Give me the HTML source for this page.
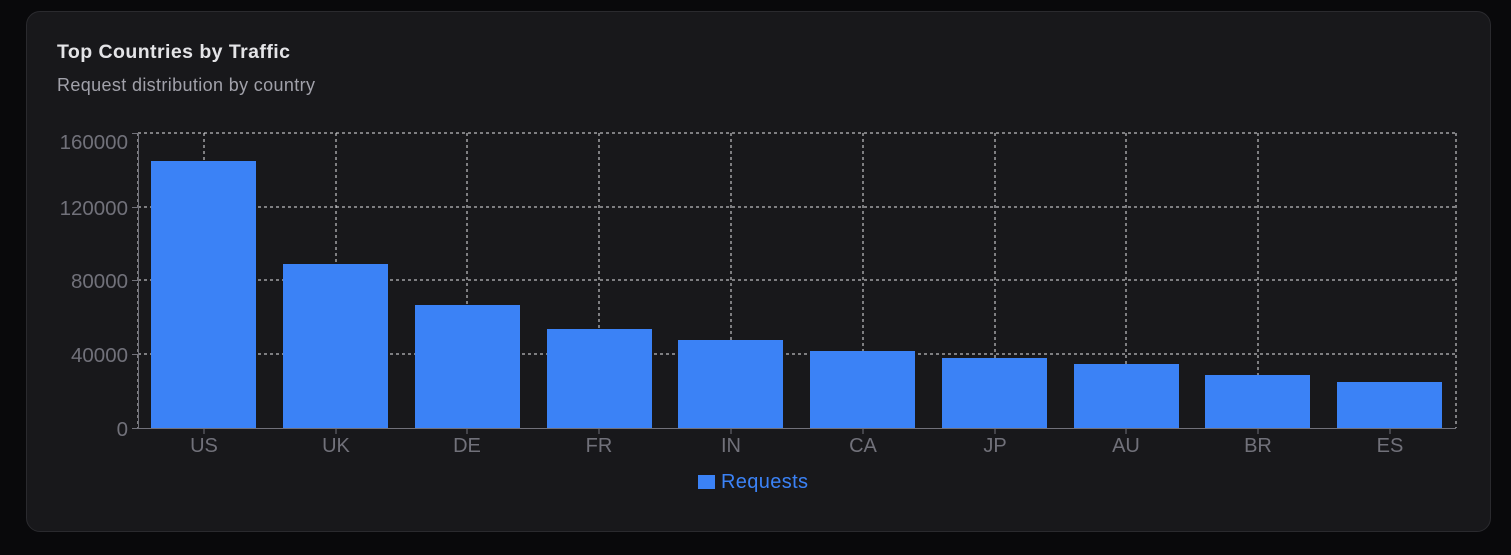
<!DOCTYPE html>
<html><head><style>
body{margin:0;background:#09090b;width:1511px;height:555px;overflow:hidden;font-family:"Liberation Sans",sans-serif}
.card{position:absolute;left:26px;top:11px;width:1465px;height:521px;background:#18181b;border:1px solid #2a2a2e;border-radius:14px;box-sizing:border-box}
</style></head><body>
<div class="card"></div>
<svg width="1511" height="555" style="position:absolute;left:0;top:0" font-family="Liberation Sans, sans-serif">
<text x="57" y="58" fill="#e4e4e7" font-size="19.5" font-weight="bold" textLength="233">Top Countries by Traffic</text>
<text x="57" y="91" fill="#a1a1aa" font-size="18" textLength="258">Request distribution by country</text>
<g stroke="#e4e4e7" stroke-dasharray="3 3" stroke-width="1">
<line x1="138" y1="133" x2="1456" y2="133"/>
<line x1="138" y1="207" x2="1456" y2="207"/>
<line x1="138" y1="280" x2="1456" y2="280"/>
<line x1="138" y1="354" x2="1456" y2="354"/>
<line x1="138" y1="133" x2="138" y2="428"/>
<line x1="204" y1="133" x2="204" y2="428"/>
<line x1="336" y1="133" x2="336" y2="428"/>
<line x1="467" y1="133" x2="467" y2="428"/>
<line x1="599" y1="133" x2="599" y2="428"/>
<line x1="731" y1="133" x2="731" y2="428"/>
<line x1="863" y1="133" x2="863" y2="428"/>
<line x1="995" y1="133" x2="995" y2="428"/>
<line x1="1126" y1="133" x2="1126" y2="428"/>
<line x1="1258" y1="133" x2="1258" y2="428"/>
<line x1="1456" y1="133" x2="1456" y2="428"/>
</g>
<g fill="#3b82f6">
<rect x="151" y="161" width="105" height="267"/>
<rect x="283" y="264" width="105" height="164"/>
<rect x="415" y="305" width="105" height="123"/>
<rect x="547" y="329" width="105" height="99"/>
<rect x="678" y="340" width="105" height="88"/>
<rect x="810" y="351" width="105" height="77"/>
<rect x="942" y="358" width="105" height="70"/>
<rect x="1074" y="364" width="105" height="64"/>
<rect x="1205" y="375" width="105" height="53"/>
<rect x="1337" y="382" width="105" height="46"/>
</g>
<g stroke="#71717a" stroke-width="1">
<line x1="138" y1="428.5" x2="1456" y2="428.5"/>
<line x1="138.5" y1="133" x2="138.5" y2="428"/>
<line x1="132" y1="133.5" x2="138" y2="133.5"/><line x1="132" y1="207.5" x2="138" y2="207.5"/><line x1="132" y1="280.5" x2="138" y2="280.5"/><line x1="132" y1="354.5" x2="138" y2="354.5"/><line x1="132" y1="428.5" x2="138" y2="428.5"/>
<line x1="204" y1="428" x2="204" y2="434"/><line x1="336" y1="428" x2="336" y2="434"/><line x1="467" y1="428" x2="467" y2="434"/><line x1="599" y1="428" x2="599" y2="434"/><line x1="731" y1="428" x2="731" y2="434"/><line x1="863" y1="428" x2="863" y2="434"/><line x1="995" y1="428" x2="995" y2="434"/><line x1="1126" y1="428" x2="1126" y2="434"/><line x1="1258" y1="428" x2="1258" y2="434"/><line x1="1390" y1="428" x2="1390" y2="434"/>
</g>
<g fill="#71717a" font-size="20.5" text-anchor="end">
<text x="128" y="149">160000</text><text x="128" y="215">120000</text><text x="128" y="288">80000</text><text x="128" y="362">40000</text><text x="128" y="436">0</text>
</g>
<g fill="#71717a" font-size="20" text-anchor="middle">
<text x="204" y="452">US</text><text x="336" y="452">UK</text><text x="467" y="452">DE</text><text x="599" y="452">FR</text><text x="731" y="452">IN</text><text x="863" y="452">CA</text><text x="995" y="452">JP</text><text x="1126" y="452">AU</text><text x="1258" y="452">BR</text><text x="1390" y="452">ES</text>
</g>
<rect x="698" y="475" width="17" height="14" fill="#3b82f6"/>
<text x="721" y="488" fill="#3b82f6" font-size="20" textLength="87">Requests</text>
</svg>
</body></html>
